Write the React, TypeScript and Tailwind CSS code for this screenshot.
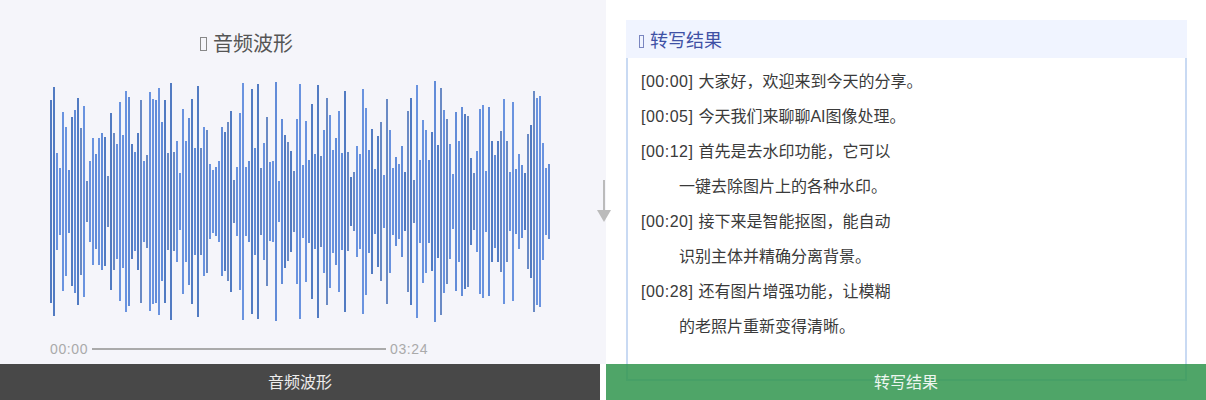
// top edge of each bar, read at 3x, the wave is mirrored around y=200.5
const tops = [
  297, 258, 456, 501, 333, 378, 507, 348, 327, 291, 381, 315, 540, 480, 411, 459, 411, 396, 408, 525, 336, 396, 429, 303,
  402, 270, 288, 429, 453, 396, 297, 480, 462, 273, 294, 297, 261, 363, 297, 456, 246, 453, 420, 516, 324, 420, 351, 294,
  441, 255, 441, 378, 387, 489, 507, 498, 480, 378, 393, 363, 330, 537, 498, 336, 246, 498, 480, 264, 441, 249, 501, 426,
  348, 483, 480, 243, 540, 354, 402, 423, 450, 510, 354, 249, 492, 360, 477, 309, 459, 252, 465, 387, 291, 342, 447, 411,
  330, 456, 270, 453, 528, 513, 435, 459, 264, 321, 447, 384, 504, 405, 363, 522, 294, 387, 501, 468, 489, 435, 513, 330,
  291, 537, 252, 477, 357, 387, 477, 393, 240, 432, 261, 327, 354, 429, 519, 333, 420, 318, 339, 345, 471, 516, 450, 324,
  312, 510, 318, 420, 462, 420, 390, 294, 420, 513, 303, 504, 459, 492, 516, 399, 372, 270, 291, 285, 426, 501, 489,
]

const tones = ["bg-[#527bc2]", "bg-[#6a93df]", "bg-[#6a8ac4]", "bg-[#628cd8]", "bg-[#6a93df]"]

const transcript = [
  { time: "[00:00]", text: "大家好，欢迎来到今天的分享。" },
  { time: "[00:05]", text: "今天我们来聊聊AI图像处理。" },
  { time: "[00:12]", text: "首先是去水印功能，它可以" },
  { text: "一键去除图片上的各种水印。" },
  { time: "[00:20]", text: "接下来是智能抠图，能自动" },
  { text: "识别主体并精确分离背景。" },
  { time: "[00:28]", text: "还有图片增强功能，让模糊" },
  { text: "的老照片重新变得清晰。" },
]

const fontStack = "font-['Liberation_Sans','Noto_Sans_CJK_SC',sans-serif]"

export default function App() {
  return (
    <div className={`relative flex h-[400px] w-[1206px] overflow-hidden bg-white ${fontStack}`}>
      {/* Waveform panel */}
      <div className="h-[364px] w-[606px] bg-[#f5f5fa] pl-[50px]">
        <h2 className="flex items-center pl-[150px] pt-[29px] text-[20px] leading-[30px] font-normal text-[#555]">
          <span className="mr-[6px] h-[14px] w-[7px] border border-[#888]" />
          音频波形
        </h2>
        <div className="mt-[21px] flex h-[242px] items-center gap-px">
          {tops.map((top, i) => (
            <div
              key={i}
              className={`w-[2px] shrink-0 ${i < 2 ? tones[0] : tones[(i * 7 + (i >> 2)) % 5]}`}
              style={{ height: 401 - (top * 2) / 3 }}
            />
          ))}
        </div>
        <div className="mt-[17px] flex items-center text-[14px] leading-[20px] tracking-[0.6px] text-[#aaa]">
          <span>00:00</span>
          <div className="mx-[4px] h-[2px] w-[294px] bg-[#aaa]" />
          <span>03:24</span>
        </div>
      </div>

      {/* Transcript panel */}
      <div className="w-[600px] pl-[20px] pr-[19px] pt-[20px]">
        <div className="flex h-[38px] items-center bg-[#f0f4ff] pl-[13px] pt-[4px] text-[18px] text-[#3f51a5]">
          <span className="mr-[6px] h-[13px] w-[5px] border border-[#7a86c0]" />
          转写结果
        </div>
        <div className="h-[323px] border-x-2 border-b-2 border-[#c9daf3] pl-[13px] pt-[6px] text-[16px] leading-[35px] text-[#3a3a3a]">
          {transcript.map((line, i) => (
            <div key={i} className={line.time ? "" : "pl-[38px]"}>
              {line.time ? <span className="tracking-[0.5px]">{line.time} </span> : null}
              {line.text}
            </div>
          ))}
        </div>
      </div>

      {/* Flow arrow between panels */}
      <div className="absolute left-[597px] top-[180px] flex w-[14px] flex-col items-center">
        <div className="h-[30px] w-[2px] bg-[#bbb]" />
        <svg width="14" height="12" viewBox="0 0 14 12" className="block">
          <polygon points="0,0 14,0 7,12" fill="#bbb" />
        </svg>
      </div>

      {/* Bottom captions */}
      <div className="absolute bottom-0 left-0 flex h-[36px] w-[600px] items-center justify-center bg-[#484848] pt-px text-[16px] text-white/90">
        音频波形
      </div>
      <div className="absolute bottom-0 left-[606px] flex h-[36px] w-[600px] items-center justify-center bg-[#30954e]/85 pt-px text-[16px] text-white/90">
        转写结果
      </div>
    </div>
  )
}
